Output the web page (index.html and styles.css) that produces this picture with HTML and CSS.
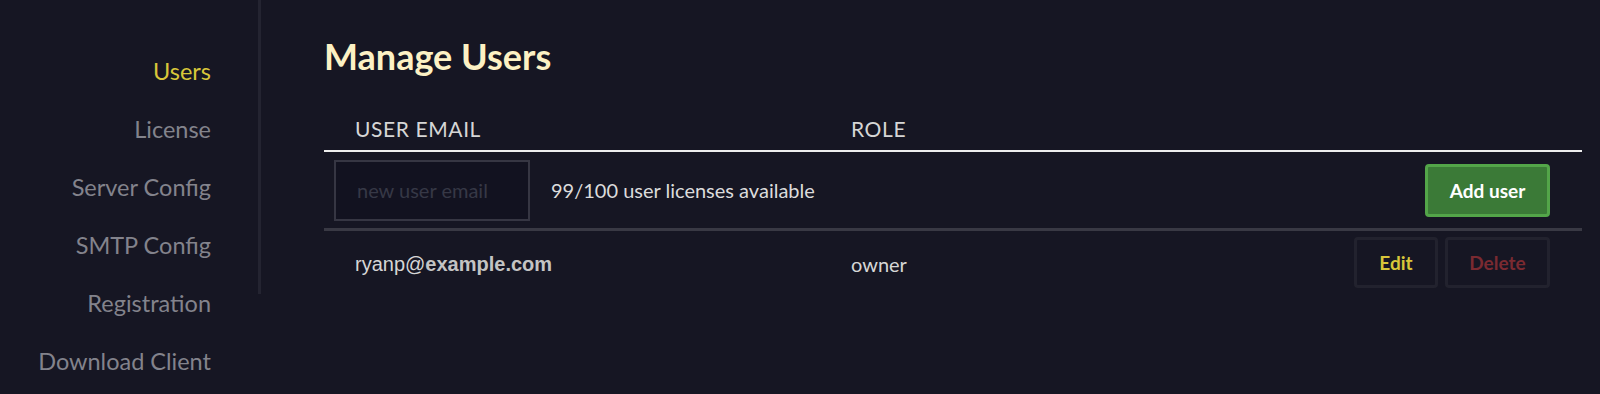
FILE: index.html
```html
<!DOCTYPE html>
<html lang="en">
<head>
    <meta charset="UTF-8">
    <meta name="viewport" content="width=device-width, initial-scale=1.0">
    <title>Manage Users</title>
    <link rel="stylesheet" href="styles.css">
</head>
<body>
    <div class="layout">
        <nav class="sidebar">
            <a class="nav-item active" href="#">Users</a>
            <a class="nav-item" href="#">License</a>
            <a class="nav-item" href="#">Server Config</a>
            <a class="nav-item" href="#">SMTP Config</a>
            <a class="nav-item" href="#">Registration</a>
            <a class="nav-item" href="#">Download Client</a>
        </nav>
        <div class="divider"></div>
        <main class="content">
            <h1>Manage Users</h1>
            <div class="users-table">
                <div class="row head">
                    <div class="cell col-email">User Email</div>
                    <div class="cell col-role">Role</div>
                </div>
                <div class="row add-row">
                    <div class="cell col-new">
                        <input type="text" class="email-input" placeholder="new user email">
                        <span class="licenses">99/100 user licenses available</span>
                    </div>
                    <div class="cell col-actions">
                        <button type="button" class="btn btn-add">Add user</button>
                    </div>
                </div>
                <div class="row user-row">
                    <div class="cell col-email"><span class="email">ryanp@<b>example.com</b></span></div>
                    <div class="cell col-role">owner</div>
                    <div class="cell col-actions">
                        <button type="button" class="btn btn-edit">Edit</button>
                        <button type="button" class="btn btn-delete">Delete</button>
                    </div>
                </div>
            </div>
        </main>
    </div>
</body>
</html>
```

FILE: styles.css
```css
body {
    background-color: #161623;
    color: #d9d9d9;
    font-family: Lato, "Open Sans", sans-serif;
    margin: 0;
    padding: 0;
    overflow: hidden;
}
.layout {
    display: flex;
    align-items: flex-start;
}
.sidebar {
    width: 211px;
    padding: 42px 47px 0 0;
    display: flex;
    flex-direction: column;
    align-items: flex-end;
}
.nav-item {
    display: block;
    line-height: 58px;
    font-size: 23.5px;
    color: #83838c;
    text-decoration: none;
    white-space: nowrap;
}
.nav-item.active {
    color: #d8c63a;
}
.divider {
    width: 3px;
    height: 294px;
    background-color: #242431;
}
.content {
    flex: 1;
    padding: 0 18px 0 63px;
}
h1 {
    margin: 35px 0 0;
    font-size: 36px;
    font-weight: 700;
    color: #fcf1c4;
    line-height: 42px;
}
.users-table {
    margin-top: 38px;
}
.row {
    display: flex;
    align-items: center;
}
.cell {
    padding: 0;
}
.col-email {
    box-sizing: border-box;
    width: 527px;
    padding-left: 31px;
}
.col-role {
    flex: 1;
}
.col-actions {
    display: flex;
    justify-content: flex-end;
    gap: 7px;
    padding-right: 32px;
}
.row.head {
    height: 34px;
    padding-top: 1px;
    align-items: flex-start;
    border-bottom: 2px solid #eeeeee;
    font-size: 21px;
    letter-spacing: 0.6px;
    text-transform: uppercase;
    color: #d6d6d6;
}
.row.head .cell {
    line-height: 26px;
}
.add-row {
    height: 76px;
    border-bottom: 3px solid #393944;
}
.col-new {
    flex: 1;
    display: flex;
    align-items: center;
    padding-left: 10px;
}
.email-input {
    box-sizing: border-box;
    width: 196px;
    height: 61px;
    padding: 0 0 0 21px;
    background-color: #121220;
    border: 2px solid #363643;
    font-family: Lato, sans-serif;
    font-size: 20px;
    color: #ddd;
    outline: none;
}
.email-input::placeholder {
    color: #363846;
}
.licenses {
    margin-left: 21px;
    font-size: 20px;
    color: #dcdcdc;
}
.btn {
    font-family: Lato, sans-serif;
    font-size: 19px;
    font-weight: 700;
    cursor: pointer;
    border-radius: 4px;
}
.btn-add {
    width: 125px;
    height: 53px;
    background-color: #3b7a37;
    border: 3px solid #53a549;
    color: #fff;
}
.user-row {
    height: 62px;
}
.user-row .col-email,
.user-row .col-role {
    padding-top: 4px;
}
.email {
    font-family: "Liberation Sans", Arial, sans-serif;
    font-size: 20px;
    color: #d6d6d6;
}
.email b {
    color: #c4c4c4;
}
.user-row .col-role {
    font-size: 20px;
    color: #d6d6d6;
}
.btn-edit, .btn-delete {
    height: 51px;
    background-color: transparent;
    border: 3px solid #22222e;
}
.btn-edit {
    width: 84px;
    color: #d8c63a;
}
.btn-delete {
    width: 105px;
    color: #7b2a31;
}
```
